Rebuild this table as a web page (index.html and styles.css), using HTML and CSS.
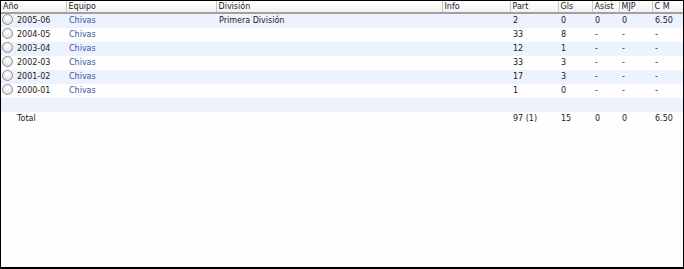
FILE: index.html
```html
<!DOCTYPE html>
<html>
<head>
<meta charset="utf-8">
<link rel="stylesheet" href="styles.css">
</head>
<body>
<div class="frame">
<table class="stats">
<colgroup>
<col class="c-ano"><col class="c-eq"><col class="c-div"><col class="c-info"><col class="c-part"><col class="c-gls"><col class="c-as"><col class="c-mjp"><col class="c-cm">
</colgroup>
<thead>
<tr><th>Año</th><th>Equipo</th><th>División</th><th>Info</th><th>Part</th><th>Gls</th><th>Asist</th><th>MJP</th><th>C M</th></tr>
</thead>
<tbody>
<tr class="alt"><td><span class="radio"></span>2005-06</td><td class="team">Chivas</td><td>Primera División</td><td></td><td>2</td><td>0</td><td>0</td><td>0</td><td>6.50</td></tr>
<tr><td><span class="radio"></span>2004-05</td><td class="team">Chivas</td><td></td><td></td><td>33</td><td>8</td><td>-</td><td>-</td><td>-</td></tr>
<tr class="alt"><td><span class="radio"></span>2003-04</td><td class="team">Chivas</td><td></td><td></td><td>12</td><td>1</td><td>-</td><td>-</td><td>-</td></tr>
<tr><td><span class="radio"></span>2002-03</td><td class="team">Chivas</td><td></td><td></td><td>33</td><td>3</td><td>-</td><td>-</td><td>-</td></tr>
<tr class="alt"><td><span class="radio"></span>2001-02</td><td class="team">Chivas</td><td></td><td></td><td>17</td><td>3</td><td>-</td><td>-</td><td>-</td></tr>
<tr><td><span class="radio"></span>2000-01</td><td class="team">Chivas</td><td></td><td></td><td>1</td><td>0</td><td>-</td><td>-</td><td>-</td></tr>
<tr class="alt"><td></td><td></td><td></td><td></td><td></td><td></td><td></td><td></td><td></td></tr>
<tr class="total"><td class="tot-label">Total</td><td></td><td></td><td></td><td>97 (1)</td><td>15</td><td>0</td><td>0</td><td>6.50</td></tr>
</tbody>
</table>
</div>
</body>
</html>
```
FILE: styles.css
```css
html, body {
  margin: 0;
  padding: 0;
  background: #fff;
}
.frame {
  box-sizing: border-box;
  width: 684px;
  height: 269px;
  border: 1px solid #000;
  border-bottom-width: 2px;
  border-right-width: 1px;
  background: #fefefe;
  overflow: hidden;
}
.stats {
  width: 682px;
  border-collapse: collapse;
  table-layout: fixed;
  font-family: "DejaVu Sans", Verdana, sans-serif;
  font-size: 8px;
  color: #1a1a1a;
}
.c-ano { width: 65px; }
.c-eq { width: 150px; }
.c-div { width: 226px; }
.c-info { width: 68px; }
.c-part { width: 48px; }
.c-gls { width: 34px; }
.c-as { width: 27px; }
.c-mjp { width: 33px; }
.c-cm { width: 31px; }
.stats th {
  height: 11px;
  padding: 0 0 0 2px;
  text-align: left;
  font-weight: normal;
  line-height: 11px;
  color: #222;
  background: linear-gradient(#fff, #f2f2f2);
  border-bottom: 2px solid #a0a0a0;
  border-left: 1px solid #c8c8c8;
  white-space: nowrap;
  overflow: hidden;
}
.stats th:first-child { border-left: none; }
.stats td {
  height: 14px;
  padding: 0 0 0 3px;
  line-height: 14px;
  white-space: nowrap;
  overflow: hidden;
}
.stats td:first-child { padding-left: 1px; }
.stats tr.alt td { background: #edf3fe; }
.stats td.team { color: #3a52a0; }
.stats td.tot-label { padding-left: 16px; }
.radio {
  display: inline-block;
  box-sizing: border-box;
  width: 11px;
  height: 11px;
  border: 1px solid #8e8e8e;
  border-radius: 50%;
  background: radial-gradient(circle at 50% 35%, #fff 0%, #f0f0f0 45%, #cfcfcf 100%);
  vertical-align: -2px;
  margin-right: 4px;
}
```
